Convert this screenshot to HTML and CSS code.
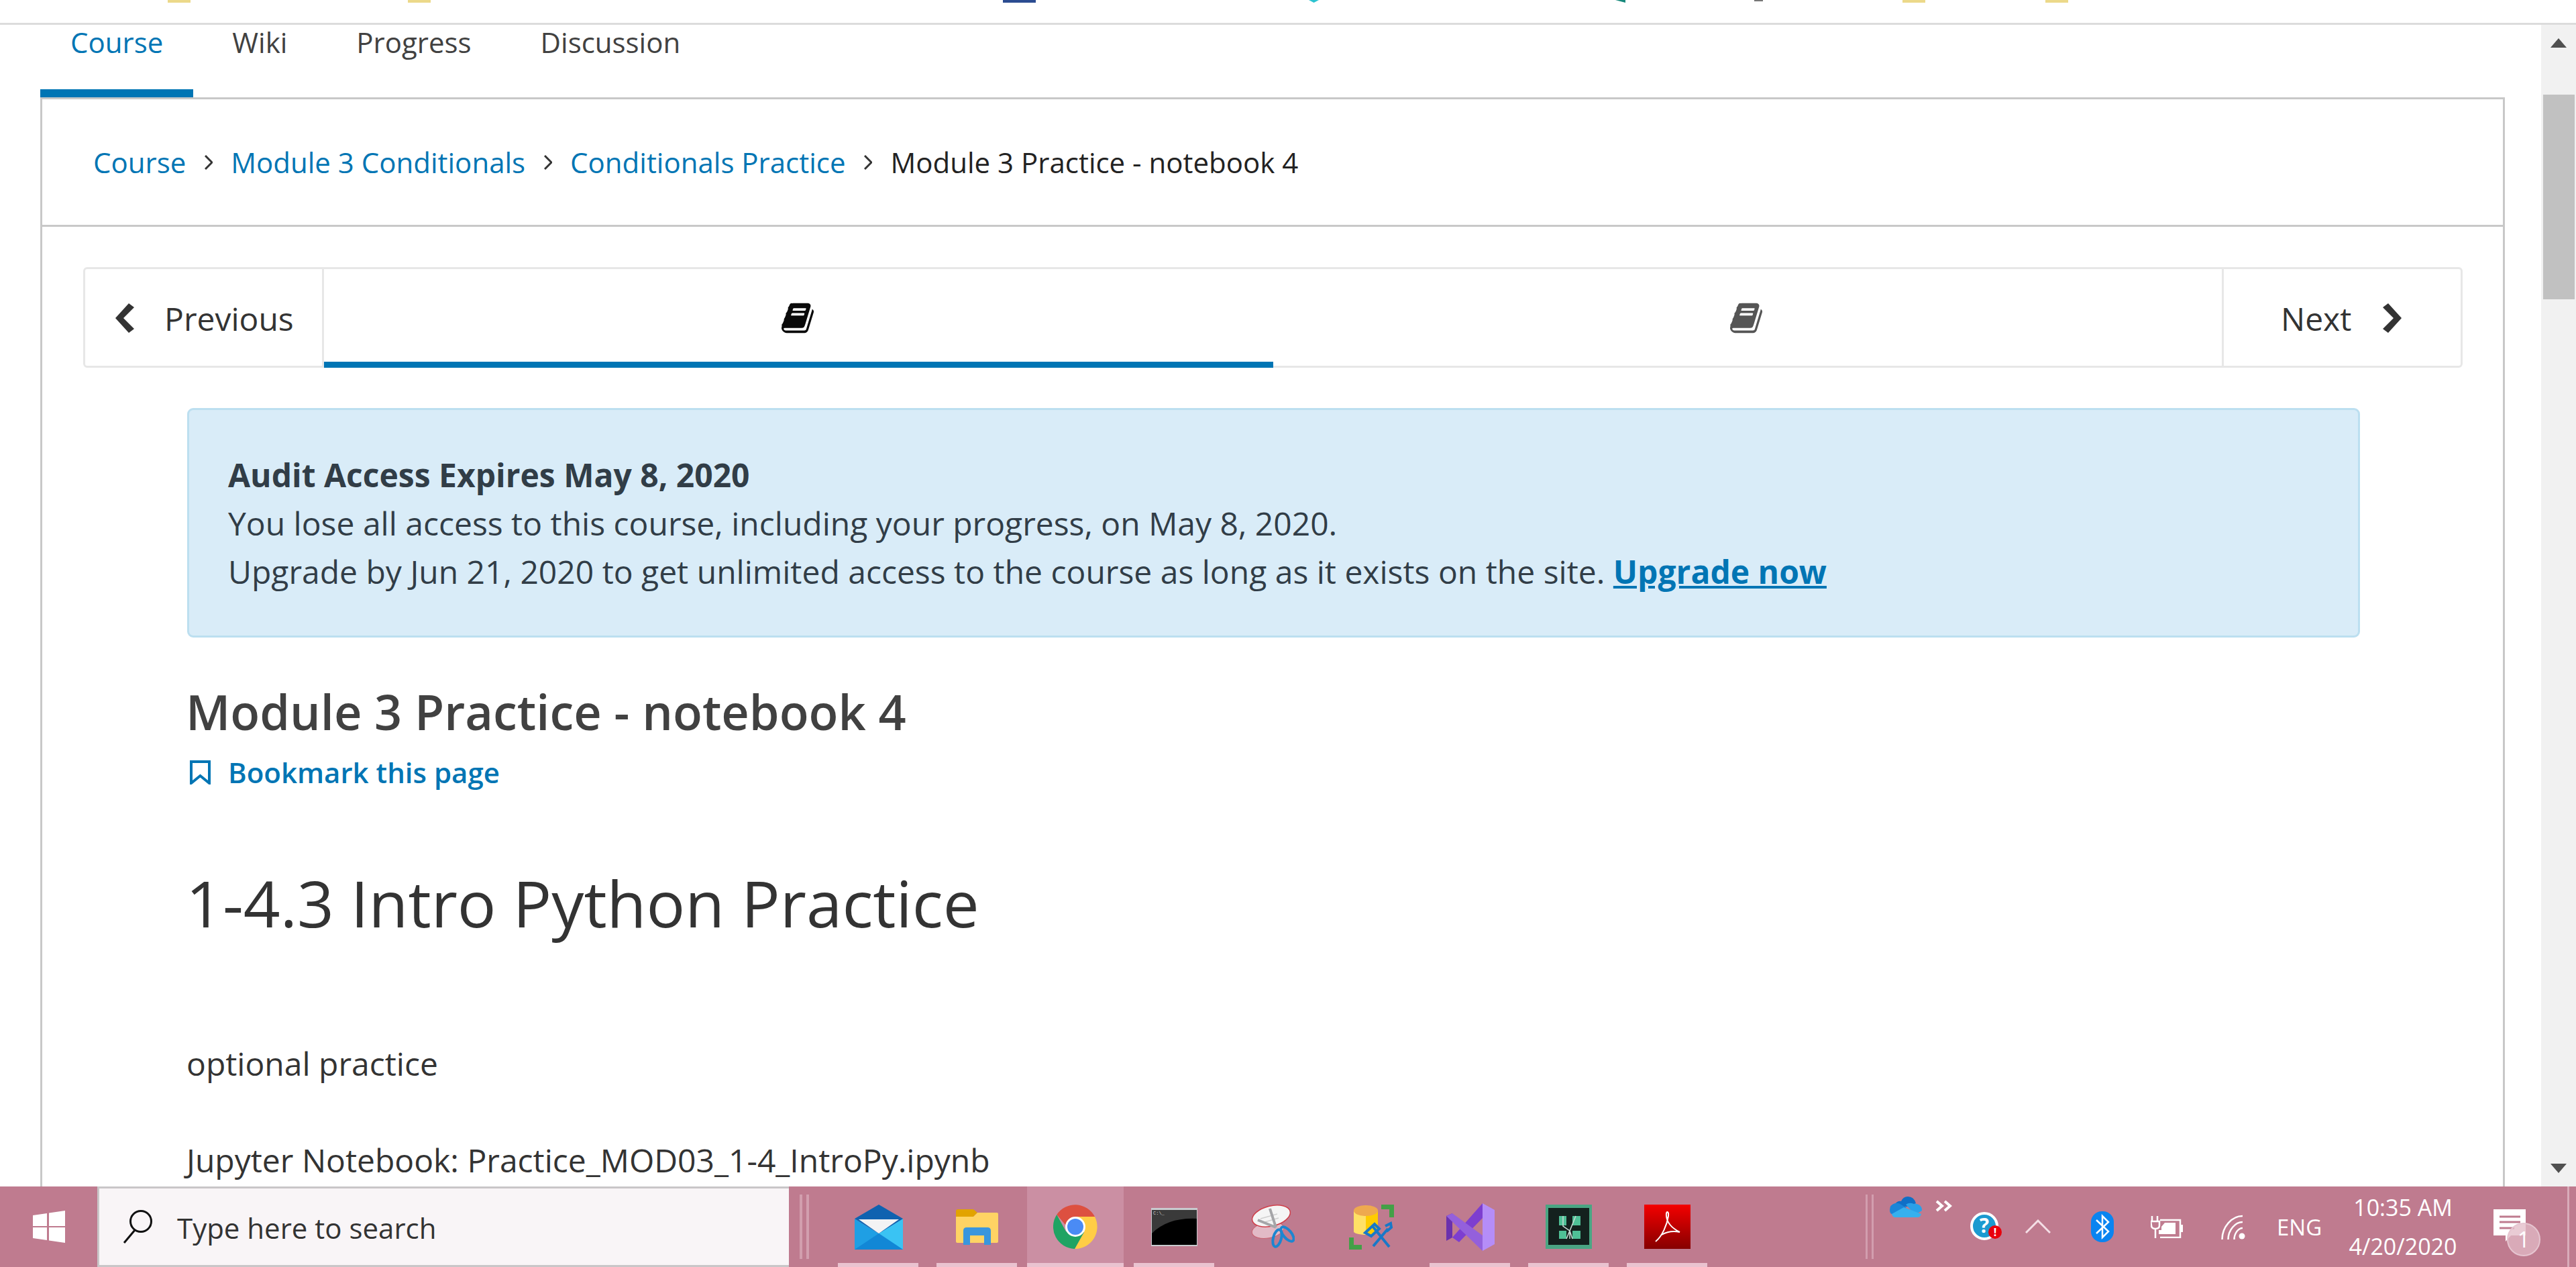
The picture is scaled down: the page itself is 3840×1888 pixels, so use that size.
FILE: index.html
```html
<!DOCTYPE html>
<html lang="en">
<head>
    <meta charset="UTF-8">
    <meta name="viewport" content="width=device-width, initial-scale=1.0">
    <title>Module 3 Practice - notebook 4</title>
    <link rel="stylesheet" href="styles.css">
</head>
<body>
    <div class="bookmarks">
        <span class="speck speck-1"></span>
        <span class="speck speck-2"></span>
        <span class="speck speck-3"></span>
        <span class="speck speck-4"></span>
        <span class="speck speck-5"></span>
        <span class="speck speck-6"></span>
        <span class="speck speck-7"></span>
        <span class="speck speck-8"></span>
    </div>

    <div class="window">
        <main class="page">
            <nav class="course-tabs">
                <a class="course-tab course-tab-active">Course</a>
                <a class="course-tab">Wiki</a>
                <a class="course-tab">Progress</a>
                <a class="course-tab">Discussion</a>
            </nav>

            <section class="card">
                <div class="breadcrumbs">
                    <a class="crumb-link">Course</a>
                    <svg class="crumb-sep" viewBox="0 0 12 22"><polyline points="1,1 11,11 1,21"/></svg>
                    <a class="crumb-link">Module 3 Conditionals</a>
                    <svg class="crumb-sep" viewBox="0 0 12 22"><polyline points="1,1 11,11 1,21"/></svg>
                    <a class="crumb-link">Conditionals Practice</a>
                    <svg class="crumb-sep" viewBox="0 0 12 22"><polyline points="1,1 11,11 1,21"/></svg>
                    <span>Module 3 Practice - notebook 4</span>
                </div>

                <div class="unit-nav">
                    <a class="unit-prev">
                        <svg class="unit-chevron" viewBox="0 0 28 44"><polygon points="20,0 28,6 12,22 28,38 20,44 0,22"/></svg>
                        Previous
                    </a>
                    <a class="unit-seq unit-seq-active">
                        <svg class="book" viewBox="0 0 1664 1792"><path d="M1639 478q40 57 18 129l-275 906q-19 64-76.500 107.500t-122.500 43.500h-923q-77 0-148.500-53.500t-99.500-131.500q-24-67-2-127 0-4 3-27t4-37q1-8-3-21.500t-3-19.500q2-11 8-21t16.500-23.500 16.500-23.500q23-38 45-91.500t30-91.500q3-10 .5-30t-.5-28q3-11 17-28t17-23q21-36 42-92t25-90q1-9-2.500-32t.5-28q4-13 22-30.500t22-22.500q19-26 42.500-84.500t27.500-96.500q1-8-3-25.500t-2-26.500q2-8 9-18t18-23 17-21q8-12 16.500-30.500t15-35 16-36 19.500-32 26.500-23.500 36-11.500 47.500 5.500l-1 3q38-9 51-9h761q74 0 114 56t18 130l-274 906q-36 119-71.500 153.500t-128.500 34.500h-869q-27 0-38 15-11 16-1 43 24 70 144 70h923q29 0 56-15.500t35-41.500l300-987q7-22 5-57 38 15 59 43zm-1064 2q-4 13 2 22.500t20 9.500h608q13 0 25.500-9.500t16.500-22.500l21-64q4-13-2-22.500t-20-9.500h-608q-13 0-25.500 9.500t-16.500 22.500zm-83 256q-4 13 2 22.500t20 9.500h608q13 0 25.500-9.500t16.500-22.500l21-64q4-13-2-22.500t-20-9.500h-608q-13 0-25.500 9.500t-16.500 22.500z"/></svg>
                    </a>
                    <a class="unit-seq">
                        <svg class="book book-muted" viewBox="0 0 1664 1792"><path d="M1639 478q40 57 18 129l-275 906q-19 64-76.500 107.500t-122.500 43.500h-923q-77 0-148.500-53.500t-99.500-131.500q-24-67-2-127 0-4 3-27t4-37q1-8-3-21.500t-3-19.500q2-11 8-21t16.500-23.500 16.500-23.500q23-38 45-91.500t30-91.500q3-10 .5-30t-.5-28q3-11 17-28t17-23q21-36 42-92t25-90q1-9-2.500-32t.5-28q4-13 22-30.500t22-22.500q19-26 42.500-84.500t27.500-96.500q1-8-3-25.500t-2-26.500q2-8 9-18t18-23 17-21q8-12 16.500-30.500t15-35 16-36 19.500-32 26.500-23.500 36-11.500 47.500 5.500l-1 3q38-9 51-9h761q74 0 114 56t18 130l-274 906q-36 119-71.500 153.500t-128.500 34.500h-869q-27 0-38 15-11 16-1 43 24 70 144 70h923q29 0 56-15.500t35-41.500l300-987q7-22 5-57 38 15 59 43zm-1064 2q-4 13 2 22.500t20 9.500h608q13 0 25.500-9.500t16.500-22.500l21-64q4-13-2-22.500t-20-9.500h-608q-13 0-25.500 9.500t-16.500 22.500zm-83 256q-4 13 2 22.500t20 9.500h608q13 0 25.500-9.500t16.500-22.500l21-64q4-13-2-22.500t-20-9.500h-608q-13 0-25.500 9.500t-16.500 22.500z"/></svg>
                    </a>
                    <a class="unit-next">
                        Next
                        <svg class="unit-chevron" viewBox="0 0 28 44"><polygon points="8,0 28,22 8,44 0,38 16,22 0,6"/></svg>
                    </a>
                </div>

                <div class="content">
                    <div class="alert">
                        <strong>Audit Access Expires May 8, 2020</strong><br>
                        You lose all access to this course, including your progress, on May 8, 2020.<br>
                        Upgrade by Jun 21, 2020 to get unlimited access to the course as long as it exists on the site.
                        <a class="alert-link">Upgrade now</a>
                    </div>

                    <h2 class="unit-title">Module 3 Practice - notebook 4</h2>
                    <a class="bookmark">
                        <svg class="bookmark-icon" viewBox="0 0 31 36"><path d="M2 2h27v32l-13.500-11L2 34z"/></svg>
                        Bookmark this page
                    </a>

                    <h1 class="lesson-title">1-4.3 Intro Python Practice</h1>
                    <p class="lesson-text">optional practice</p>
                    <p class="lesson-text lesson-file">Jupyter Notebook: Practice_MOD03_1-4_IntroPy.ipynb</p>
                </div>
            </section>
        </main>

        <div class="scrollbar">
            <div class="scroll-up"></div>
            <div class="scroll-thumb"></div>
            <div class="scroll-down"></div>
        </div>
    </div>

    <footer class="taskbar">
        <div class="start">
            <svg width="48" height="48" viewBox="0 0 48 48"><path fill="#fff" d="M0 7l21-3v19H0zM24 3.500L48 0v23H24zM0 25h21v19L0 41zM24 25h24v23l-24-3.500z"/></svg>
        </div>

        <div class="search">
            <svg class="search-icon" width="48" height="52" viewBox="0 0 48 52"><circle cx="30" cy="18" r="15.500"/><line x1="21" y1="31" x2="5" y2="50"/></svg>
            <span class="search-text">Type here to search</span>
        </div>

        <div class="grip"></div>

        <div class="task task-open">
            <svg width="72" height="67" viewBox="0 0 72 67">
                <polygon fill="#1f9fe4" points="0,21 36,43 72,21 72,67 0,67"/>
                <polygon fill="#3ac3f3" points="36,43 72,21 72,67"/>
                <polygon fill="#1287d6" points="0,67 36,43 72,67"/>
                <polygon fill="#0f62b0" points="0,21 36,0 72,21 36,43"/>
                <polygon fill="#f3f3f4" points="6,22 66,22 36,43"/>
            </svg>
        </div>
        <div class="task task-open">
            <svg width="63" height="53" viewBox="0 0 63 53">
                <path fill="#e2a300" d="M0 3q0-3 3-3h23l6 5-6 6H0z"/>
                <path fill="#ffd364" d="M0 11h26l6-6h29q2 0 2 2v41q0 2-2 2H2q-2 0-2-2z"/>
                <path fill="#3a96dd" d="M11 53V32q0-5 5-5h31q5 0 5 5v21H42V39H21v14z"/>
            </svg>
        </div>
        <div class="task task-active">
            <svg width="66" height="66" viewBox="0 0 66 66">
                <path fill="#dd5040" d="M5.300 15A33 33 0 0 1 62 18H33L18 30z"/>
                <path fill="#ffcd46" d="M62 18A33 33 0 0 1 32 66L46 41 33 18z"/>
                <path fill="#1fa363" d="M32 66A33 33 0 0 1 5.300 15L19 40l27 1z"/>
                <circle fill="#fff" cx="33" cy="33" r="15"/>
                <circle fill="#4a8bf5" cx="33" cy="33" r="12"/>
            </svg>
        </div>
        <div class="task task-open">
            <svg width="69" height="57" viewBox="0 0 69 57">
                <rect width="69" height="57" fill="#c9cbcf"/>
                <rect x="1" y="3" width="67" height="52" fill="#000"/>
                <path fill="#3a3a3a" d="M1 3h67v13Q25 14 1 38z"/>
                <text class="cmd-text" x="3" y="10">C:\_</text>
            </svg>
        </div>
        <div class="task">
            <svg width="65" height="66" viewBox="0 0 65 66">
                <ellipse cx="25" cy="38" rx="24" ry="12" fill="#e2bac6" stroke="#c9606f" stroke-width="1" transform="rotate(-10 25 38)"/>
                <ellipse cx="30" cy="17" rx="29" ry="15" fill="#f5f5f5" stroke="#cf3f4a" stroke-width="1.500" transform="rotate(-14 30 17)"/>
                <path d="M14 21l25-7M17 27l24-7" stroke="#cfcfcf" stroke-width="1.500" fill="none"/>
                <path d="M28 6l9 28M10 23l27 11" stroke="#a5a5a8" stroke-width="4" fill="none"/>
                <g fill="none" stroke="#1d86d0" stroke-width="4">
                    <ellipse cx="39" cy="50" rx="6" ry="13" transform="rotate(15 39 50)"/>
                    <ellipse cx="54" cy="44" rx="6" ry="13" transform="rotate(-40 54 44)"/>
                </g>
            </svg>
        </div>
        <div class="task">
            <svg width="67" height="67" viewBox="0 0 67 67">
                <path fill="#ffe066" d="M7 8h18v37q-13 0-18-4z"/>
                <path fill="#ffcc00" d="M25 8h18v33q-5 4-18 4z"/>
                <ellipse cx="25" cy="9" rx="18" ry="8" fill="#eea94f"/>
                <path fill="#43a047" d="M48 0h19v19h-7V7H48zM0 49h7v11h12v7H0z"/>
                <g fill="none" stroke="#1878c8" stroke-width="4">
                    <path d="M34 31l26 32M36 62l22-26"/>
                    <path d="M24 42l14-13 7 7-12 11zM54 32l8-4 1 6-7 6"/>
                </g>
            </svg>
        </div>
        <div class="task task-open">
            <svg width="72" height="71" viewBox="0 0 72 71">
                <polygon fill="#6b31ad" points="0,19 9,15 9,51 0,56"/>
                <polygon fill="#7d3ed0" points="54,0 54,22 19,58 9,51"/>
                <polygon fill="#9460dc" points="0,19 9,15 54,48 54,71"/>
                <polygon fill="#b58df8" points="54,0 72,10 72,61 54,71"/>
            </svg>
        </div>
        <div class="task task-open">
            <svg width="69" height="66" viewBox="0 0 69 66">
                <rect width="69" height="66" fill="#4aa583"/>
                <rect x="4" y="5" width="61" height="55" fill="#14211e"/>
                <path fill="#4fc096" d="M20 17h11v14h-11zM40 17h12v14H40zM20 39h11v12H20zM40 39h12v12H40z"/>
                <path d="M26 17v15l10 7 9-22M36 39v12M31 51l5-12 4 12" stroke="#c9d9d3" stroke-width="1.500" fill="none"/>
            </svg>
        </div>
        <div class="task task-open">
            <svg width="69" height="66" viewBox="0 0 69 66">
                <defs><linearGradient id="pdf-red" x1="0" y1="0" x2="0" y2="1"><stop offset="0" stop-color="#f40000"/><stop offset="1" stop-color="#860000"/></linearGradient></defs>
                <rect width="69" height="66" fill="url(#pdf-red)"/>
                <path d="M17 55c10-8 17-25 19-38 1-7-4-9-3 0 1 9 8 18 20 24-10-2-20 0-27 4" fill="none" stroke="#fff" stroke-width="2"/>
            </svg>
        </div>

        <div class="tray">
            <div class="tray-grip"></div>
            <svg class="tray-cloud" width="48" height="31" viewBox="0 0 48 31">
                <path fill="#0f6fc6" d="M8 11Q12 6 17 7 20 0 27 0q9 0 12 10l-7 4-20 3z"/>
                <path fill="#2aa0e8" d="M24 12q5-4 12-1 2-1 4 0 8 2 8 9v1l-10 6z"/>
                <path fill="#1a85d8" d="M0 20Q0 12 8 10q5-1 9 2l8 5-19 10Q0 27 0 20z"/>
                <path fill="#36b0ee" d="M3 26l18-10 26 10q-1 5-6 5H7q-3-1-4-5z"/>
            </svg>
            <svg class="tray-more" width="25" height="18" viewBox="0 0 25 18"><polyline points="2,2 10,9 2,16"/><polyline points="14,2 22,9 14,16"/></svg>
            <svg class="tray-help" width="48" height="44" viewBox="0 0 48 44">
                <circle cx="21" cy="21" r="19" fill="#1b9ad0" stroke="#fff" stroke-width="4"/>
                <text class="help-text" x="21" y="31">?</text>
                <circle cx="37" cy="30" r="10" fill="#e8000c"/>
                <text class="help-alert" x="37" y="36">!</text>
            </svg>
            <svg class="tray-chevron" width="38" height="22" viewBox="0 0 38 22"><polyline points="1,20 19,2 37,20"/></svg>
            <svg class="tray-bluetooth" width="34" height="46" viewBox="0 0 34 46">
                <rect width="34" height="46" rx="16" fill="#0a84f0"/>
                <polyline points="8,13 26,30 17,39 17,7 26,16 8,33" fill="none" stroke="#fff" stroke-width="2.500"/>
            </svg>
            <svg class="tray-battery" width="48" height="34" viewBox="0 0 48 34">
                <path d="M14 7h30v26H14" fill="none" stroke="#fff" stroke-width="2.500"/>
                <path fill="#fff" d="M16 17l5-6h16v17H12v-6h4zM45 14h3v11h-3z"/>
                <path d="M2 1v8M10 1v8M0 9h13v6q0 5-6 5t-6-5zM7 20v14" fill="none" stroke="#fff" stroke-width="2.500"/>
            </svg>
            <svg class="tray-wifi" width="37" height="37" viewBox="0 0 37 37">
                <g fill="none" stroke="#fff" stroke-width="2.500">
                    <path d="M1.500 37C1.500 18 16 2 32 2"/>
                    <path d="M10.500 37C10.500 23 21 11 32 11"/>
                    <path d="M19.500 37c0-9 6-17 12.500-17"/>
                </g>
                <circle cx="31" cy="32" r="4.500" fill="#fff"/>
            </svg>
            <span class="tray-lang">ENG</span>
            <div class="clock">
                <span>10:35 AM</span>
                <span>4/20/2020</span>
            </div>
            <div class="notify">
                <svg width="48" height="48" viewBox="0 0 48 48">
                    <path fill="#fff" d="M0 0h48v39H26l-8 9v-9H0z"/>
                    <path d="M9 11h31M9 19h31M9 28h22" stroke="#bf7b8f" stroke-width="3"/>
                </svg>
                <span class="notify-badge">1</span>
            </div>
            <div class="tray-edge"></div>
        </div>
    </footer>
</body>
</html>
```

FILE: styles.css
```css
* {
    box-sizing: border-box;
}

html, body {
    margin: 0;
    height: 100%;
    overflow: hidden;
}

body {
    display: flex;
    flex-direction: column;
    background-color: #fff;
    color: #333;
    font-family: "Open Sans", sans-serif;
    font-size: 48px;
}

a {
    color: inherit;
    text-decoration: none;
}

/* bottom edge of the bookmark bar, cut off by the photo */
.bookmarks {
    display: flex;
    height: 37px;
    flex: none;
    border-bottom: 3px solid #dcdcdc;
}

.speck {
    width: 34px;
    height: 4px;
    background-color: #ecd98a;
}

.speck-1 { margin-left: 250px; }
.speck-2 { margin-left: 324px; }
.speck-3 { margin-left: 853px; width: 49px; background-color: #2b4c91; }
.speck-4 { margin-left: 407px; width: 15px; background-color: #2cc3d0; clip-path: polygon(0 0, 100% 0, 50% 100%); }
.speck-5 { margin-left: 442px; width: 15px; background-color: #17897c; clip-path: polygon(0 0, 100% 0, 100% 100%); }
.speck-6 { margin-left: 192px; width: 13px; height: 2px; background-color: #777; }
.speck-7 { margin-left: 208px; }
.speck-8 { margin-left: 179px; }

.window {
    display: flex;
    flex: 1;
    min-height: 0;
}

.page {
    flex: 1;
    min-width: 0;
    padding: 0 54px 0 60px;
}

.course-tabs {
    display: flex;
    gap: 13px;
    height: 108px;
    font-size: 42px;
    line-height: 52px;
}

.course-tab {
    height: 108px;
    padding: 0 45px;
    color: #414141;
}

.course-tab-active {
    color: #0075b4;
    border-bottom: 12px solid #0075b4;
}

.card {
    border: 3px solid #c8c8c8;
    min-height: 1700px;
}

.breadcrumbs {
    display: flex;
    align-items: center;
    gap: 27.500px;
    height: 190px;
    padding-left: 76px;
    border-bottom: 3px solid #c8c8c8;
    font-size: 42px;
    color: #222;
}

.crumb-link {
    color: #0075b4;
}

.crumb-sep {
    width: 12px;
    height: 22px;
    fill: none;
    stroke: #333;
    stroke-width: 3;
}

.unit-nav {
    display: flex;
    height: 150px;
    margin: 60px 60px 0 61px;
    border: 3px solid #e7e7e7;
    border-radius: 6px;
}

.unit-prev, .unit-next {
    display: flex;
    align-items: center;
    flex: none;
    padding-top: 2px;
    color: #333;
}

.unit-prev {
    width: 356px;
    gap: 45px;
    padding-left: 45px;
    border-right: 3px solid #e7e7e7;
}

.unit-next {
    width: 356px;
    gap: 47px;
    padding-left: 85px;
    border-left: 3px solid #e7e7e7;
}

.unit-chevron {
    width: 28px;
    height: 44px;
    fill: #333;
    flex: none;
}

.unit-seq {
    display: flex;
    align-items: center;
    justify-content: center;
    flex: 1;
    padding-bottom: 6px;
}

.unit-seq-active {
    border-bottom: 9px solid #0075b4;
    margin-bottom: -3px;
    padding-bottom: 0;
}

.book {
    width: 48px;
    height: 52px;
    margin: 7px 3px 0 0;
    fill: #0a0a0a;
}

.book-muted {
    fill: #555;
}

.content {
    padding: 60px 213px 0 216px;
}

.alert {
    height: 342px;
    padding: 61px 58px;
    background-color: #d9ecf8;
    border: 3px solid #bcdff0;
    border-radius: 9px;
    line-height: 72px;
    color: #313d47;
}

.alert-link {
    color: #0075b4;
    font-weight: 700;
    text-decoration: underline;
}

.unit-title {
    margin: 67px 0 0 -2px;
    font-size: 72px;
    line-height: 86px;
    font-weight: 600;
    color: #414141;
}

.bookmark {
    display: flex;
    align-items: center;
    gap: 26px;
    margin-top: 19px;
    padding-left: 4px;
    color: #0075b4;
    font-size: 42px;
    line-height: 58px;
    font-weight: 600;
}

.bookmark-icon {
    width: 31px;
    height: 36px;
    fill: none;
    stroke: #0075b4;
    stroke-width: 4;
}

.lesson-title {
    margin: 105px 0 0 -2px;
    font-size: 96px;
    line-height: 120px;
    font-weight: 400;
    color: #333;
}

.lesson-text {
    margin: 144px 0 0 -1px;
    line-height: 72px;
    color: #333;
}

.lesson-file {
    margin-top: 72px;
}

.scrollbar {
    display: flex;
    flex-direction: column;
    flex: none;
    width: 52px;
    background-color: #f1f1f1;
}

.scroll-up {
    width: 0;
    height: 0;
    margin: 20px 0 0 14px;
    border-left: 12px solid transparent;
    border-right: 12px solid transparent;
    border-bottom: 14px solid #505050;
}

.scroll-thumb {
    height: 305px;
    margin: 70px 2px 0 3px;
    background-color: #c1c1c1;
}

.scroll-down {
    width: 0;
    height: 0;
    margin: auto 0 20px 14px;
    border-left: 12px solid transparent;
    border-right: 12px solid transparent;
    border-top: 14px solid #505050;
}

/* sits above the page, which runs on below the fold */
.taskbar {
    position: relative;
    z-index: 1;
    display: flex;
    align-items: center;
    flex: none;
    height: 120px;
    background-color: #bf7b8f;
}

.start {
    display: flex;
    align-items: center;
    justify-content: center;
    flex: none;
    width: 145px;
    height: 100%;
}

.search {
    display: flex;
    align-items: center;
    gap: 36px;
    flex: none;
    width: 1031px;
    height: 100%;
    padding-left: 32px;
    background-color: #f9f5f7;
    border: 3px solid #c9c6c8;
    border-width: 3px 0 3px 3px;
    color: #333;
    font-size: 42px;
}

.search-text {
    margin-top: 3px;
}

.search-icon {
    flex: none;
    fill: none;
    stroke: #111;
    stroke-width: 3;
}

.grip {
    flex: none;
    width: 14px;
    height: 96px;
    margin: 0 30px 0 16px;
    border-left: 4px solid #d29eae;
    border-right: 4px solid #d29eae;
}

.task {
    display: flex;
    align-items: center;
    justify-content: center;
    flex: none;
    position: relative;
    width: 147px;
    height: 100%;
}

.task-open::after, .task-active::after {
    content: "";
    position: absolute;
    bottom: 0;
    left: 13px;
    width: 120px;
    height: 6px;
    background-color: #eac3d0;
}

.task-active {
    width: 144px;
    margin: 0 2px 0 1px;
    background-color: #cb8fa3;
}

.task-active::after {
    left: 0;
    width: 100%;
}

.cmd-text {
    fill: #ccc;
    font-size: 7px;
    font-family: "Liberation Mono", monospace;
}

.tray {
    display: flex;
    align-items: center;
    margin-left: auto;
    height: 100%;
    color: #fff;
}

.tray svg {
    flex: none;
}

.tray-grip {
    flex: none;
    width: 12px;
    height: 96px;
    border-left: 3px solid #d29eae;
    border-right: 3px solid #d29eae;
}

.tray-cloud {
    align-self: flex-start;
    margin: 15px 0 0 24px;
}

.tray-more {
    align-self: flex-start;
    margin: 20px 0 0 20px;
    fill: none;
    stroke: #fff;
    stroke-width: 4;
}

.tray-help {
    margin-left: 27px;
}

.help-text {
    fill: #fff;
    font-size: 30px;
    font-weight: 700;
    text-anchor: middle;
}

.help-alert {
    fill: #fff;
    font-size: 16px;
    font-weight: 700;
    text-anchor: middle;
}

.tray-chevron {
    margin-left: 34px;
    fill: none;
    stroke: #f4dfe6;
    stroke-width: 3;
}

.tray-bluetooth {
    margin-left: 60px;
}

.tray-battery {
    margin-left: 55px;
}

.tray-wifi {
    margin-left: 57px;
}

.tray-lang {
    flex: none;
    width: 68px;
    margin-left: 46px;
    font-size: 33px;
    white-space: nowrap;
}

.clock {
    display: flex;
    flex-direction: column;
    align-items: center;
    gap: 16px;
    flex: none;
    width: 160px;
    margin-left: 40px;
    font-size: 34px;
    line-height: 42px;
    white-space: nowrap;
}

.notify {
    position: relative;
    flex: none;
    width: 48px;
    height: 48px;
    margin: -4px 0 0 55px;
}

.notify svg {
    display: block;
}

.notify-badge {
    position: absolute;
    left: 20px;
    top: 20px;
    width: 50px;
    height: 50px;
    border-radius: 50%;
    border: 2px solid #e6c5d0;
    background-color: rgba(225, 185, 198, 0.75);
    text-align: center;
    font-size: 32px;
    line-height: 46px;
}

.tray-edge {
    flex: none;
    width: 3px;
    height: 100%;
    margin: 0 10px 0 62px;
    background-color: #d9acba;
}
```
